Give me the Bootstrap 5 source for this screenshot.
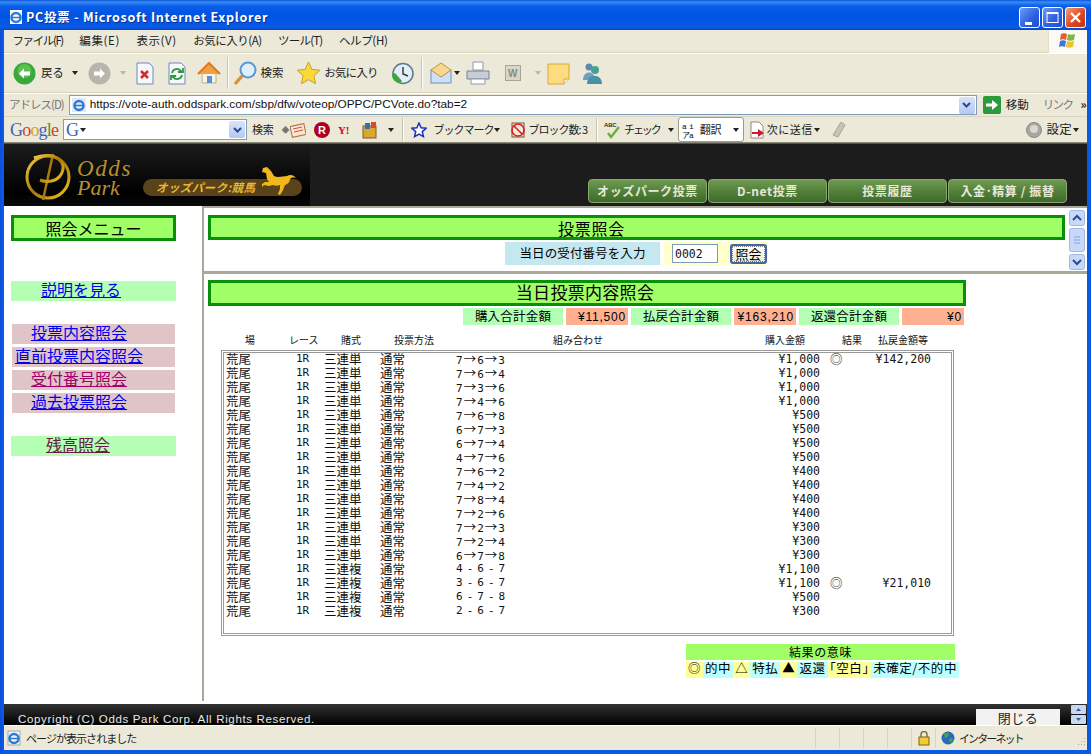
<!DOCTYPE html>
<html lang="ja">
<head>
<meta charset="utf-8">
<title>PC投票 - Microsoft Internet Explorer</title>
<link href="https://cdn.jsdelivr.net/npm/bootstrap@5.3.0/dist/css/bootstrap.min.css" rel="stylesheet">
<style>
html,body{margin:0;height:754px;overflow:hidden;background:#fff}
body{font-family:"Noto Sans CJK JP","Liberation Sans",sans-serif;font-size:12px;color:#000;line-height:1}
svg{display:block;flex:none}
.xpwin{width:1091px;height:754px;background:linear-gradient(90deg,#0a4fd8,#0a5ae6 3px,#0a5ae6);padding:0 4px 4px;display:flex;flex-direction:column;overflow:hidden}
.xptitle{height:30px;margin:0 -4px;padding:4px 5px 0 8px;flex:none;background:linear-gradient(180deg,#0a55d8 0,#3a8cf5 2px,#0a5fe8 6px,#0054e3 14px,#0458e6 24px,#0a5ae8 27px,#0a48c0 30px);color:#fff;font-weight:700;font-size:12.5px;letter-spacing:.72px;text-shadow:1px 1px 0 #0a2f90}
.xpbtn{width:21px;height:21px;border:1px solid #fff;border-radius:3px;background:linear-gradient(135deg,#6f9af4,#2a5ee0 60%,#2050d0)}
.xpbtn.closer{background:linear-gradient(135deg,#f0a080,#e0481c 55%,#c03410)}
.xpgap{gap:2px}
.xpbar{background:#ece9d8;flex:none;color:#222}
.xpbar span{white-space:nowrap;flex:none}
.mbar{height:23px;border-bottom:1px solid #d8d4c0;font-size:11.5px}
.mbar>span{margin-left:8.5px;margin-right:8px}
.kj{letter-spacing:.6px}.kna1{letter-spacing:-1.4px}.kna2{letter-spacing:-.8px}.kna3{letter-spacing:-.35px}.kna4{letter-spacing:-.5px}
.winflag{width:39px;height:23px;background:#fbfaf5;border-left:1px solid #e2dfcc}
.tbar{height:40px;border-top:1px solid #fff;border-bottom:1px solid #d8d4c0;font-size:11.5px;letter-spacing:-.2px}
.tsep{width:2px;height:32px;border-left:1px solid #c8c4b0;border-right:1px solid #fff;flex:none}
.gbar .tsep{height:24px}
.adbar{height:23px;border-top:1px solid #fff;font-size:11.5px}
.adfield{width:908px;flex:none;height:20px;border:1px solid #7f9db9;background:#fff;margin-left:5px;padding-left:1px;font-family:"Liberation Sans",sans-serif;font-size:11.8px;color:#111}
.ddbtn{width:16px;height:17px;margin-left:auto;margin-right:1px;background:linear-gradient(180deg,#d8e4fa,#b4c8f2);border-radius:2px;color:#2a4a90}
.gbar{height:27px;border-top:1px solid #d8d4c0;font-size:11px;letter-spacing:-.2px;border-bottom:1px solid #8a8878}
.gfield{width:184px;flex:none;height:21px;border:1px solid #7f9db9;background:#fff}
.glogo{font-family:"Liberation Serif",serif;font-size:18px;letter-spacing:-.8px;width:48px;font-weight:400}
.gg{width:14px}
.gblue{color:#3c5fc0}.gred{color:#d04030}.gyel{color:#d8a020}.ggrn{color:#3a9a40}
.tribox{width:0;height:0;border-left:3px solid transparent;border-right:3px solid transparent;border-top:4px solid #222;flex:none}
.trans{width:66px;flex:none;height:25px;background:#fff;border:1px solid #9a9a90;border-radius:3px}
.lsa{letter-spacing:-.8px}.lsb{letter-spacing:-1px}.lsc{letter-spacing:-2.1px}.lsd{letter-spacing:.5px}.lse{letter-spacing:-1.6px}
.dia{font-size:8px}
.sett{font-size:12.5px;letter-spacing:.2px}
.siteh{height:62px;margin-top:1px;background:#1c1c1c;flex:none}
.brandz{width:306px;height:62px;background:linear-gradient(180deg,#1c1c1c,#000 80%,#0a0a0a)}
.tabz{padding:0 20px 3px 0;gap:1px;margin-left:auto}
.navt{width:119px;height:24px;border:1px solid #8aa870;border-radius:4px;background:linear-gradient(180deg,#6f9a50,#4f7f38 55%,#3f6a2c);color:#e8e8d8;font-weight:700;font-size:12px;letter-spacing:.6px}
.framez{flex:1 1 auto;min-height:0;background:#fff;border-bottom:3px solid #fff}
.leftf{width:200px;flex:none;border-right:2px solid #aaa89a;padding:9px 0 0 7px}
.menuh{width:165px;height:26px;background:#a0ff66;border:3px solid #0a8f0a;font-size:16px}
.menul{height:20px;font-size:16px;text-decoration:underline;color:#0000ee;background:#dfc5c8;width:163px;margin-left:1px;margin-bottom:3px;padding-left:19px;white-space:nowrap}
.menul.wide{padding-left:3px}
.menul.seen{color:#a0006a}
.menug{background:#b4ffb4;width:165px;margin-left:0;padding-left:30px;margin-bottom:0}
.menug.seen{color:#6a1a4a;padding-left:35px}
.gaptop1{margin-top:40px}.gaptop2{margin-top:23px}.gaptop3{margin-top:23px}
.rightf{flex:1 1 auto;min-width:0}
.upperf{height:68px;flex:none;border-bottom:3px solid #aaa89a;border-top:2px solid #aaa89a;padding:0 0 0 4px}
.upin{padding-top:7px}
.sbar{width:16px;height:60px;margin:2px 2px 0 0;flex:none}
.titb{background:#a0ff66;border:3px solid #0a8f0a;font-size:16px;letter-spacing:.8px}
.titb.t1{width:857px;height:25px;padding-right:90px}
.titb.t2{width:758px;height:26px;font-size:17px;letter-spacing:.3px;padding:0 4px 3px 0}
.qrow{width:857px;height:24px;margin-top:2px;padding-left:297px}
.qlab{width:155px;height:23px;background:#c5e8f0;font-size:12.5px;letter-spacing:.1px}
.qcell{width:104px;height:23px;background:#ffffcc;margin-left:4px;padding-left:8px}
.qinp{width:46px;height:19px;border:1px solid #7f9db9;background:#fff;padding-left:2px;font-family:"DejaVu Sans Mono",monospace;font-size:11.500px;border-radius:0;color:#111}
.qbtn{width:37px;height:20px;margin-left:12px;border:2px solid #3c68a8;border-radius:3px;background:linear-gradient(180deg,#fff,#ece9d8);font-size:13px;padding:0;line-height:14px;outline:1px dotted #777;outline-offset:-3px}
.lowerf{padding:6px 0 0 4px;height:427px;flex:none;overflow:hidden}
.sumr{width:758px;height:17px;margin-top:2px;font-size:12.5px;letter-spacing:.2px;gap:3px;padding-left:255px}
.sumg{background:#b4ffb4;width:100px;height:17px}
.sums{background:#ffb090;width:62px;height:17px;padding-right:2px;font-family:"Liberation Sans",sans-serif;font-size:12px;letter-spacing:.8px}
.vhead,.vrow{display:grid;grid-template-columns:70px 28px 56px 76px 298px 66px 10px 41px 60px;white-space:nowrap}
.vhead{height:15px;margin-top:10px;font-size:10px;margin-left:18px;width:740px;color:#111}
.vhead span{display:block}
.vh1{padding-left:19px}.vh2{margin-left:-7px}.vh3{padding-left:17px}.vh4{padding-left:14px}.vh5{padding-left:97px}.vh6{text-align:right;padding-right:15px}.vh8{padding-left:12px}.vh9{padding-left:7px}
.vlist{width:733px;height:286px;margin-left:13px;border:1px solid #9a9a9a;padding:1px 2px 2px;background:#fff;box-shadow:inset 0 0 0 1px #fff,inset 0 0 0 2px #9a9a9a}
.vrow{height:14px;line-height:14px;font-size:12.5px;padding:0 0 0 2px;color:#111}
.lat{font-family:"DejaVu Sans Mono",monospace;font-size:11px}
.lat2{letter-spacing:-1.3px}
.ar{font-family:"Noto Sans CJK JP",sans-serif;font-size:12.5px;padding:0 1px}
.ram{text-align:right;font-size:11.5px}
.lega{width:269px;height:16px;background:#a0ff66;margin:8px 0 0 478px;font-size:12px;letter-spacing:.6px}
.legb{margin:2px 0 0 478px;height:16px;font-size:12.5px;letter-spacing:.55px}
.ky{background:#ffff99;height:16px;padding:0 2px}.kc{background:#bbffff;height:16px;padding:0 2px}
.footz{height:21px;flex:none;background:linear-gradient(180deg,#333 0,#000 100%);overflow:hidden;color:#e8e8e8;font-family:"Liberation Sans",sans-serif;font-size:11.5px;letter-spacing:.66px;padding-left:14px}
.footz .cpy{margin-top:10px;white-space:nowrap}
.closeb{width:84px;height:16px;background:#f2f2f2;color:#222;font-size:13px;letter-spacing:.5px;margin-left:auto;margin-top:5px;margin-right:11px;font-family:"Noto Sans CJK JP",sans-serif;flex:none}
.spin{width:15px;height:21px;margin-right:1px;flex:none;gap:1px}
.statb{height:25px;background:#ece9d8;border-top:1px solid #fff;flex:none;font-size:11px;letter-spacing:-.95px;color:#222}
.stcell{width:24px;height:20px;border-left:1px solid #d8d4c0;flex:none}
.stlast{width:152px;height:20px;border-left:1px solid #d8d4c0;flex:none;padding-left:5px;padding-right:1px}
.nett{letter-spacing:-1.9px}
.ml1{margin-left:1px}.ml2{margin-left:2px}.ml3{margin-left:3px}.ml4{margin-left:4px}.ml5{margin-left:5px}.ml6{margin-left:6px}.ml7{margin-left:7px}.ml8{margin-left:8px}.ml9{margin-left:9px}.ml10{margin-left:10px}.ml12{margin-left:12px}.ml13{margin-left:13px}.ml14{margin-left:14px}.ml15{margin-left:15px}
.grayt{color:#777}
</style>
</head>
<body>
<div class="xpwin">
  <div class="xptitle d-flex align-items-center">
    <svg width="16" height="16" viewBox="0 0 16 16"><rect x="2" y="1" width="12" height="14" fill="#fff"/><circle cx="8" cy="8.500" r="4.500" fill="none" stroke="#2a7ad8" stroke-width="2.500"/><path d="M4 8.500h8" stroke="#2a7ad8" stroke-width="1.500"/></svg>
    <span class="ml2">PC投票 - Microsoft Internet Explorer</span>
    <div class="ms-auto d-flex xpgap">
      <div class="xpbtn d-flex align-items-end justify-content-center"><svg width="13" height="13" viewBox="0 0 13 13"><rect x="2" y="8" width="7" height="3" fill="#fff"/></svg></div>
      <div class="xpbtn d-flex align-items-center justify-content-center"><svg width="13" height="13" viewBox="0 0 13 13"><rect x="1" y="1.500" width="11" height="10" fill="none" stroke="#fff" stroke-width="1"/><rect x="1" y="1" width="11" height="2" fill="#fff"/></svg></div>
      <div class="xpbtn closer d-flex align-items-center justify-content-center"><svg width="13" height="13" viewBox="0 0 13 13"><path d="M2 2l9 9M11 2l-9 9" stroke="#fff" stroke-width="2.400"/></svg></div>
    </div>
  </div>

  <div class="xpbar mbar d-flex align-items-center">
    <span class="kna1">ファイル(F)</span><span class="kj">編集(E)</span><span class="kj">表示(V)</span><span class="kna4">お気に入り(A)</span><span class="kna2">ツール(T)</span><span class="kna3">ヘルプ(H)</span>
    <div class="winflag ms-auto d-flex align-items-center justify-content-center"><svg width="20" height="18" viewBox="0 0 20 18"><path d="M3 2q3-1.500 6 0l-1 6q-3-1.500-6 0z" fill="#e85a30"/><path d="M10 2q3 1.500 7 0l-1 6q-4 1.500-7 0z" fill="#7ab840"/><path d="M2 9q3-1.500 6 0l-1 6q-3-1.500-6 0z" fill="#3a78d8"/><path d="M9 9q3 1.500 7 0l-1 6q-4 1.500-7 0z" fill="#f0c030"/></svg></div>
  </div>

  <div class="xpbar tbar d-flex align-items-center">
    <svg class="ml9" width="23" height="23" viewBox="0 0 23 23"><circle cx="11.500" cy="11.500" r="11" fill="#3aa83a"/><circle cx="11.500" cy="9" r="7" fill="#7cd86a" opacity=".5"/><path d="M6 11.500l5-5v3h6v4h-6v3z" fill="#fff"/></svg>
    <span class="ml5">戻る</span><div class="tribox ml8"></div>
    <svg class="ml10" width="23" height="23" viewBox="0 0 23 23"><circle cx="11.500" cy="11.500" r="11" fill="#b8b6ac"/><path d="M17 11.500l-5-5v3H6v4h6v3z" fill="#fff"/></svg>
    <div class="tribox ml9 opacity-25"></div>
    <svg class="ml9" width="20" height="23" viewBox="0 0 20 23"><path d="M2 1h12l4 4v17H2z" fill="#f6f8fc" stroke="#6a8ab8"/><path d="M6 9l7 7M13 9l-7 7" stroke="#d82a2a" stroke-width="2.600"/></svg>
    <svg class="ml12" width="20" height="23" viewBox="0 0 20 23"><path d="M2 1h12l4 4v17H2z" fill="#f6f8fc" stroke="#6a8ab8"/><path d="M5 11a5 5 0 0 1 9-2l-3 1h5V6M15 13a5 5 0 0 1-9 2l3-1H4v4" fill="none" stroke="#2a9a3a" stroke-width="1.800"/></svg>
    <svg class="ml10" width="24" height="24" viewBox="0 0 24 24"><path d="M5 12v10h14V12z" fill="#f6f2e4" stroke="#b8b090"/><path d="M1 13L12 2l11 11" fill="#f0a040" stroke="#e07820" stroke-width="2"/><rect x="10" y="15" width="5" height="7" fill="#5a90d0"/></svg>
    <div class="tsep ml6"></div>
    <svg class="ml4" width="25" height="26" viewBox="0 0 25 26"><circle cx="15" cy="10" r="7.500" fill="#dff0fc" stroke="#5a9ad0" stroke-width="2"/><path d="M9.500 15.500L2 24" stroke="#d89040" stroke-width="3.400"/></svg>
    <span class="ml3">検索</span>
    <svg class="ml13" width="25" height="24" viewBox="0 0 25 24"><path d="M12.500 1l3.400 7.400 8 .9-6 5.400 1.700 8-7.100-4-7.100 4 1.700-8-6-5.400 8-.9z" fill="#fbd83a" stroke="#c8a020"/></svg>
    <span class="ml3 lsa">お気に入り</span>
    <svg class="ml13" width="23" height="23" viewBox="0 0 23 23"><circle cx="12" cy="11.500" r="10" fill="#e4eef8" stroke="#5a7a90" stroke-width="1.500"/><path d="M12 5v7l5 2" stroke="#333" fill="none" stroke-width="1.400"/><path d="M1 12a8 8 0 0 0 8 9l2-2-7-8z" fill="#3aa83a"/></svg>
    <div class="tsep ml7"></div>
    <svg class="ml7" width="22" height="22" viewBox="0 0 22 22"><rect x="1" y="8" width="20" height="13" fill="#cfe0f6" stroke="#6a90c0"/><path d="M1 8l10-7 10 7-10 7z" fill="#f8d890" stroke="#c09040"/></svg>
    <div class="tribox ml2"></div>
    <svg class="ml6" width="24" height="24" viewBox="0 0 24 24"><path d="M7 1h10v8H7z" fill="#fff" stroke="#8a9ab0"/><path d="M1 10h22v8H1z" fill="#c8ccd4" stroke="#7a8290"/><path d="M5 18h14v5H5z" fill="#fff" stroke="#8a9ab0"/></svg>
    <svg class="ml15" width="16" height="16" viewBox="0 0 16 16"><rect x=".5" y=".5" width="15" height="15" fill="#d8d6c8" stroke="#a8a69a"/><text x="3" y="12" font-size="10" font-family="Liberation Sans" font-weight="700" fill="#8a8a80">W</text></svg>
    <div class="tribox ml14 opacity-25"></div>
    <svg class="ml6" width="23" height="23" viewBox="0 0 23 23"><path d="M1 2h21v15l-5 5H1z" fill="#fbdc80" stroke="#d8a830"/><path d="M17 22v-5h5" fill="#f8f0c8" stroke="#d8a830"/></svg>
    <svg class="ml9" width="24" height="23" viewBox="0 0 24 23"><circle cx="10" cy="5" r="3.500" fill="#5a8ab0"/><path d="M4 18c0-10 12-10 12 0z" fill="#6aa0c0"/><circle cx="16" cy="8" r="4" fill="#4aa090"/><path d="M8 22c0-11 15-11 15 0z" fill="#4a90a8"/></svg>
  </div>

  <div class="xpbar adbar d-flex align-items-center">
    <span class="ml5 grayt lsb">アドレス(D)</span>
    <div class="adfield d-flex align-items-center">
      <svg width="16" height="16" viewBox="0 0 16 16"><rect x="1" y="1" width="14" height="14" fill="#e4e8f4"/><circle cx="8" cy="8.500" r="4.500" fill="none" stroke="#2a7ad8" stroke-width="2.500"/><path d="M4 8.500h8" stroke="#2a7ad8" stroke-width="1.500"/></svg>
      <span class="ml3">https://vote-auth.oddspark.com/sbp/dfw/voteop/OPPC/PCVote.do?tab=2</span>
      <div class="ddbtn d-flex align-items-center justify-content-center"><svg width="9" height="6" viewBox="0 0 9 6"><path d="M1 1l3.500 3.500L8 1" fill="none" stroke="#2a4a90" stroke-width="2"/></svg></div>
    </div>
    <svg class="ml6" width="18" height="18" viewBox="0 0 18 18"><rect width="18" height="18" rx="2" fill="#2a9a3a"/><path d="M3 7.500h6V4l6 5-6 5v-3.500H3z" fill="#fff"/></svg>
    <span class="ml5">移動</span>
    <span class="ml14 grayt lse">リンク</span>
    <span class="ml8 fw-bold">»</span>
  </div>

  <div class="xpbar gbar d-flex align-items-center">
    <span class="glogo ml6"><span class="gblue">G</span><span class="gred">o</span><span class="gyel">o</span><span class="gblue">g</span><span class="ggrn">l</span><span class="gred">e</span></span>
    <div class="gfield ml5 d-flex align-items-center">
      <span class="glogo gg gblue ml2">G</span>
      <div class="tribox"></div>
      <div class="ddbtn d-flex align-items-center justify-content-center"><svg width="9" height="6" viewBox="0 0 9 6"><path d="M1 1l3.500 3.500L8 1" fill="none" stroke="#2a4a90" stroke-width="2"/></svg></div>
    </div>
    <span class="ml5">検索</span>
    <span class="ml8 grayt dia">◆</span>
    <svg class="ml1" width="16" height="16" viewBox="0 0 16 16"><rect x="1" y="3" width="14" height="11" fill="#f8e8d0" stroke="#b06a40" transform="rotate(-12 8 8)"/><path d="M3 7l9-2M4 10l9-2" stroke="#d84a40"/></svg>
    <svg class="ml8" width="16" height="16" viewBox="0 0 16 16"><circle cx="8" cy="8" r="8" fill="#b00020"/><text x="4" y="12" font-size="11" font-family="Liberation Sans" font-weight="700" fill="#fff">R</text></svg>
    <svg class="ml8" width="16" height="12" viewBox="0 0 16 12"><text x="0" y="10" font-size="11" font-family="Liberation Serif" font-weight="700" fill="#d80020">Y!</text></svg>
    <svg class="ml8" width="16" height="18" viewBox="0 0 16 18"><rect x="1" y="5" width="13" height="12" fill="#d8a830" stroke="#806020"/><rect x="3" y="2" width="5" height="6" fill="#3a6ac0"/><rect x="9" y="1" width="5" height="6" fill="#d84a30"/></svg>
    <div class="tribox ml10"></div>
    <div class="tsep ml8"></div>
    <svg class="ml7" width="16" height="16" viewBox="0 0 16 16"><path d="M8 1l2.100 4.700 5 .5-3.800 3.400 1.100 5L8 12l-4.400 2.600 1.100-5L.9 6.200l5-.5z" fill="#fff" stroke="#2030b8" stroke-width="1.500"/></svg>
    <span class="ml6 lsb">ブックマーク</span><div class="tribox ml1"></div>
    <svg class="ml10" width="16" height="16" viewBox="0 0 16 16"><rect x="2" y="1" width="12" height="14" fill="#f4e8d8" stroke="#705040"/><circle cx="8" cy="8" r="6" fill="none" stroke="#d82020" stroke-width="1.600"/><path d="M4 4l8 8" stroke="#d82020" stroke-width="1.600"/></svg>
    <span class="ml2 lsb">ブロック数: 3</span>
    <div class="tsep ml9"></div>
    <svg class="ml6" width="18" height="18" viewBox="0 0 18 18"><text x="0" y="6" font-size="6" font-family="Liberation Sans" font-weight="700" fill="#333">ABC</text><path d="M4 12l3 4 8-10" fill="none" stroke="#6ab040" stroke-width="2.400"/></svg>
    <span class="ml2 lsc">チェック</span><div class="tribox ml8"></div>
    <div class="trans ml4 d-flex align-items-center">
      <svg class="ml3" width="14" height="18" viewBox="0 0 14 18"><text x="0" y="8" font-size="8" font-family="Liberation Mono" fill="#111">a</text><text x="7" y="8" font-size="8" font-family="Liberation Mono" fill="#111">i</text><text x="0" y="17" font-size="8" font-family="Noto Sans CJK JP" fill="#111">ア</text><text x="7" y="17" font-size="8" font-family="Liberation Mono" fill="#111">a</text></svg>
      <span class="ml4">翻訳</span>
      <div class="tribox ms-auto me-1"></div>
    </div>
    <svg class="ml5" width="16" height="18" viewBox="0 0 16 18"><path d="M2 1h8l4 4v12H2z" fill="#fff" stroke="#8a8a8a"/><path d="M3 11h6V8l6 4-6 4v-3H3z" fill="#d01830"/></svg>
    <span class="ml2 lsd">次に送信</span><div class="tribox ml1"></div>
    <svg class="ml12" width="14" height="17" viewBox="0 0 14 17"><path d="M9 1l4 3-7 12-5-2z" fill="#c8c4b4" stroke="#a8a498"/></svg>
    <svg class="ms-auto" width="16" height="16" viewBox="0 0 16 16"><circle cx="8" cy="8" r="7.500" fill="#a8a8a0" stroke="#8a8a84"/><circle cx="8" cy="7" r="4" fill="#d8d8d4"/></svg>
    <span class="ml5 sett">設定</span><div class="tribox ml1 me-2"></div>
  </div>

  <div class="siteh d-flex align-items-end">
    <div class="brandz">
      <svg width="306" height="62" viewBox="0 0 306 62">
        <defs><linearGradient id="gld" x1="0" y1="0" x2="1" y2="1"><stop offset="0" stop-color="#f4d040"/><stop offset=".5" stop-color="#a87808"/><stop offset="1" stop-color="#f0c820"/></linearGradient></defs>
        <circle cx="44" cy="33" r="21" fill="none" stroke="url(#gld)" stroke-width="3"/>
        <path d="M39 56L49 10" stroke="url(#gld)" stroke-width="2.400"/>
        <path d="M30 14c20-8 36 4 26 18-4 5-12 7-20 4" fill="none" stroke="url(#gld)" stroke-width="3"/>
        <text x="73" y="32" font-family="Liberation Serif" font-style="italic" font-size="23" fill="#b89030" letter-spacing="1.600">Odds</text>
        <text x="73" y="51" font-family="Liberation Serif" font-style="italic" font-size="22" fill="#b89030">Park</text>
        <rect x="139" y="35" width="159" height="17" rx="8.500" fill="#5a431a"/>
        <text x="152" y="48" font-family="Noto Sans CJK JP" font-style="italic" font-weight="700" font-size="11.500" fill="#e8b830" letter-spacing=".4">オッズパーク:競馬</text>
        <path d="M259 24L263 23L267 27L270 32C274 34 279 32 283 32C286 30 290 31 292 34C289 33 287 34 286 35C286 38 284 40 281 41L279 46L276 51L274 50L276 45L276 41C273 42 271 42 269 41L265 42L260 41L258 43L258 40L261 38L265 38L263 35L262 29L258 28Z" fill="#f0b818"/>
      </svg>
    </div>
    <div class="tabz d-flex">
      <div class="navt d-flex align-items-center justify-content-center">オッズパーク投票</div>
      <div class="navt d-flex align-items-center justify-content-center">D-net投票</div>
      <div class="navt d-flex align-items-center justify-content-center">投票履歴</div>
      <div class="navt d-flex align-items-center justify-content-center">入金･精算 / 振替</div>
    </div>
  </div>

  <div class="framez d-flex">
    <div class="leftf">
      <div class="menuh d-flex align-items-center justify-content-center">照会メニュー</div>
      <div class="menul menug gaptop1">説明を見る</div>
      <div class="menul gaptop2">投票内容照会</div>
      <div class="menul wide">直前投票内容照会</div>
      <div class="menul seen">受付番号照会</div>
      <div class="menul">過去投票照会</div>
      <div class="menul menug seen gaptop3">残高照会</div>
    </div>
    <div class="rightf d-flex flex-column">
      <div class="upperf d-flex">
        <div class="flex-grow-1 upin">
          <div class="titb t1 d-flex align-items-center justify-content-center">投票照会</div>
          <div class="qrow d-flex">
            <div class="qlab d-flex align-items-center justify-content-center">当日の受付番号を入力</div>
            <div class="qcell d-flex align-items-center">
              <input class="qinp" value="0002" aria-label="受付番号">
              <button type="button" class="qbtn">照会</button>
            </div>
          </div>
        </div>
        <div class="sbar d-flex flex-column justify-content-between">
          <svg width="16" height="16" viewBox="0 0 16 16"><rect x=".5" y=".5" width="15" height="15" rx="2" fill="#c8d8f8" stroke="#a0b8e8"/><path d="M4 10l4-4 4 4" fill="none" stroke="#2a4a90" stroke-width="2"/></svg>
          <svg width="16" height="24" viewBox="0 0 16 24"><rect x=".5" y=".5" width="15" height="23" rx="2" fill="#c8d8f8" stroke="#a0b8e8"/><path d="M5 9h6M5 12h6M5 15h6" stroke="#8aa4d8"/></svg>
          <svg width="16" height="16" viewBox="0 0 16 16"><rect x=".5" y=".5" width="15" height="15" rx="2" fill="#c8d8f8" stroke="#a0b8e8"/><path d="M4 6l4 4 4-4" fill="none" stroke="#2a4a90" stroke-width="2"/></svg>
        </div>
      </div>
      <div class="lowerf">
        <div class="titb t2 d-flex align-items-center justify-content-center">当日投票内容照会</div>
        <div class="sumr d-flex">
          <div class="sumg d-flex align-items-center justify-content-center">購入合計金額</div>
          <div class="sums d-flex align-items-center justify-content-end">¥11,500</div>
          <div class="sumg d-flex align-items-center justify-content-center">払戻合計金額</div>
          <div class="sums d-flex align-items-center justify-content-end">¥163,210</div>
          <div class="sumg d-flex align-items-center justify-content-center">返還合計金額</div>
          <div class="sums d-flex align-items-center justify-content-end">¥0</div>
        </div>
        <div class="vhead">
          <span class="vh1">場</span><span class="vh2">レース</span><span class="vh3">賭式</span><span class="vh4">投票方法</span><span class="vh5">組み合わせ</span><span class="vh6">購入金額</span><span></span><span class="vh8">結果</span><span class="vh9">払戻金額等</span>
        </div>
        <div class="vlist">
          <div class="vrow"><span>荒尾</span><span class="lat">1R</span><span>三連単</span><span>通常</span><span class="lat">7<span class="ar">→</span>6<span class="ar">→</span>3</span><span class="lat ram">¥1,000</span><span></span><span>◎</span><span class="lat ram">¥142,200</span></div>
          <div class="vrow"><span>荒尾</span><span class="lat">1R</span><span>三連単</span><span>通常</span><span class="lat">7<span class="ar">→</span>6<span class="ar">→</span>4</span><span class="lat ram">¥1,000</span></div>
          <div class="vrow"><span>荒尾</span><span class="lat">1R</span><span>三連単</span><span>通常</span><span class="lat">7<span class="ar">→</span>3<span class="ar">→</span>6</span><span class="lat ram">¥1,000</span></div>
          <div class="vrow"><span>荒尾</span><span class="lat">1R</span><span>三連単</span><span>通常</span><span class="lat">7<span class="ar">→</span>4<span class="ar">→</span>6</span><span class="lat ram">¥1,000</span></div>
          <div class="vrow"><span>荒尾</span><span class="lat">1R</span><span>三連単</span><span>通常</span><span class="lat">7<span class="ar">→</span>6<span class="ar">→</span>8</span><span class="lat ram">¥500</span></div>
          <div class="vrow"><span>荒尾</span><span class="lat">1R</span><span>三連単</span><span>通常</span><span class="lat">6<span class="ar">→</span>7<span class="ar">→</span>3</span><span class="lat ram">¥500</span></div>
          <div class="vrow"><span>荒尾</span><span class="lat">1R</span><span>三連単</span><span>通常</span><span class="lat">6<span class="ar">→</span>7<span class="ar">→</span>4</span><span class="lat ram">¥500</span></div>
          <div class="vrow"><span>荒尾</span><span class="lat">1R</span><span>三連単</span><span>通常</span><span class="lat">4<span class="ar">→</span>7<span class="ar">→</span>6</span><span class="lat ram">¥500</span></div>
          <div class="vrow"><span>荒尾</span><span class="lat">1R</span><span>三連単</span><span>通常</span><span class="lat">7<span class="ar">→</span>6<span class="ar">→</span>2</span><span class="lat ram">¥400</span></div>
          <div class="vrow"><span>荒尾</span><span class="lat">1R</span><span>三連単</span><span>通常</span><span class="lat">7<span class="ar">→</span>4<span class="ar">→</span>2</span><span class="lat ram">¥400</span></div>
          <div class="vrow"><span>荒尾</span><span class="lat">1R</span><span>三連単</span><span>通常</span><span class="lat">7<span class="ar">→</span>8<span class="ar">→</span>4</span><span class="lat ram">¥400</span></div>
          <div class="vrow"><span>荒尾</span><span class="lat">1R</span><span>三連単</span><span>通常</span><span class="lat">7<span class="ar">→</span>2<span class="ar">→</span>6</span><span class="lat ram">¥400</span></div>
          <div class="vrow"><span>荒尾</span><span class="lat">1R</span><span>三連単</span><span>通常</span><span class="lat">7<span class="ar">→</span>2<span class="ar">→</span>3</span><span class="lat ram">¥300</span></div>
          <div class="vrow"><span>荒尾</span><span class="lat">1R</span><span>三連単</span><span>通常</span><span class="lat">7<span class="ar">→</span>2<span class="ar">→</span>4</span><span class="lat ram">¥300</span></div>
          <div class="vrow"><span>荒尾</span><span class="lat">1R</span><span>三連単</span><span>通常</span><span class="lat">6<span class="ar">→</span>7<span class="ar">→</span>8</span><span class="lat ram">¥300</span></div>
          <div class="vrow"><span>荒尾</span><span class="lat">1R</span><span>三連複</span><span>通常</span><span class="lat lat2">4 - 6 - 7</span><span class="lat ram">¥1,100</span></div>
          <div class="vrow"><span>荒尾</span><span class="lat">1R</span><span>三連複</span><span>通常</span><span class="lat lat2">3 - 6 - 7</span><span class="lat ram">¥1,100</span><span></span><span>◎</span><span class="lat ram">¥21,010</span></div>
          <div class="vrow"><span>荒尾</span><span class="lat">1R</span><span>三連複</span><span>通常</span><span class="lat lat2">6 - 7 - 8</span><span class="lat ram">¥500</span></div>
          <div class="vrow"><span>荒尾</span><span class="lat">1R</span><span>三連複</span><span>通常</span><span class="lat lat2">2 - 6 - 7</span><span class="lat ram">¥300</span></div>
        </div>
        <div class="lega d-flex align-items-center justify-content-center">結果の意味</div>
        <div class="legb d-flex">
          <span class="ky">◎</span><span class="kc">的中</span><span class="ky">△</span><span class="kc">特払</span><span class="ky">▲</span><span class="kc">返還</span><span class="ky">｢空白｣</span><span class="kc">未確定/不的中</span>
        </div>
      </div>
    </div>
  </div>

  <div class="footz d-flex">
    <div class="cpy">Copyright (C) Odds Park Corp. All Rights Reserved.</div>
    <div class="closeb d-flex align-items-center justify-content-center">閉じる</div>
    <div class="spin d-flex flex-column justify-content-center">
      <svg width="15" height="9" viewBox="0 0 15 9"><rect width="15" height="9" rx="1" fill="#c8d8f0"/><path d="M5 6l2.500-3L10 6z" fill="#3a5a90"/></svg>
      <svg width="15" height="9" viewBox="0 0 15 9"><rect width="15" height="9" rx="1" fill="#c8d8f0"/><path d="M5 3l2.500 3L10 3z" fill="#3a5a90"/></svg>
    </div>
  </div>

  <div class="statb d-flex align-items-center">
    <svg class="ml2" width="16" height="16" viewBox="0 0 16 16"><rect x="2" y="1" width="12" height="14" fill="#f4f4f4" stroke="#a8a8a8"/><circle cx="8" cy="8.500" r="4.500" fill="none" stroke="#2a7ad8" stroke-width="2.500"/><path d="M4 8.500h8" stroke="#2a7ad8" stroke-width="1.500"/></svg>
    <span class="ml4">ページが表示されました</span>
    <div class="ms-auto d-flex align-items-center">
      <div class="stcell"></div><div class="stcell"></div><div class="stcell"></div><div class="stcell"></div>
      <div class="stcell d-flex align-items-center justify-content-center"><svg width="12" height="15" viewBox="0 0 12 15"><rect x="1" y="6" width="10" height="8" fill="#f0d030" stroke="#806010"/><path d="M3 6V3.500a3 3 0 0 1 6 0V6" fill="none" stroke="#807040" stroke-width="1.500"/></svg></div>
      <div class="stlast d-flex align-items-center"><svg width="14" height="14" viewBox="0 0 14 14"><circle cx="7" cy="7" r="6.500" fill="#2a68c0"/><path d="M3 3q3-2 5 0l-1 3-3 1zM8 8l3-1 1 2-3 3z" fill="#48a838"/></svg>
        <span class="ml4 nett">インターネット</span>
        <svg class="ms-auto align-self-end" width="12" height="12" viewBox="0 0 12 12"><path d="M10 2h1v1h-1zM7 5h1v1H7zM10 5h1v1h-1zM4 8h1v1H4zM7 8h1v1H7zM10 8h1v1h-1z" fill="#a8a490"/></svg>
      </div>
    </div>
  </div>
</div>
</body>
</html>
